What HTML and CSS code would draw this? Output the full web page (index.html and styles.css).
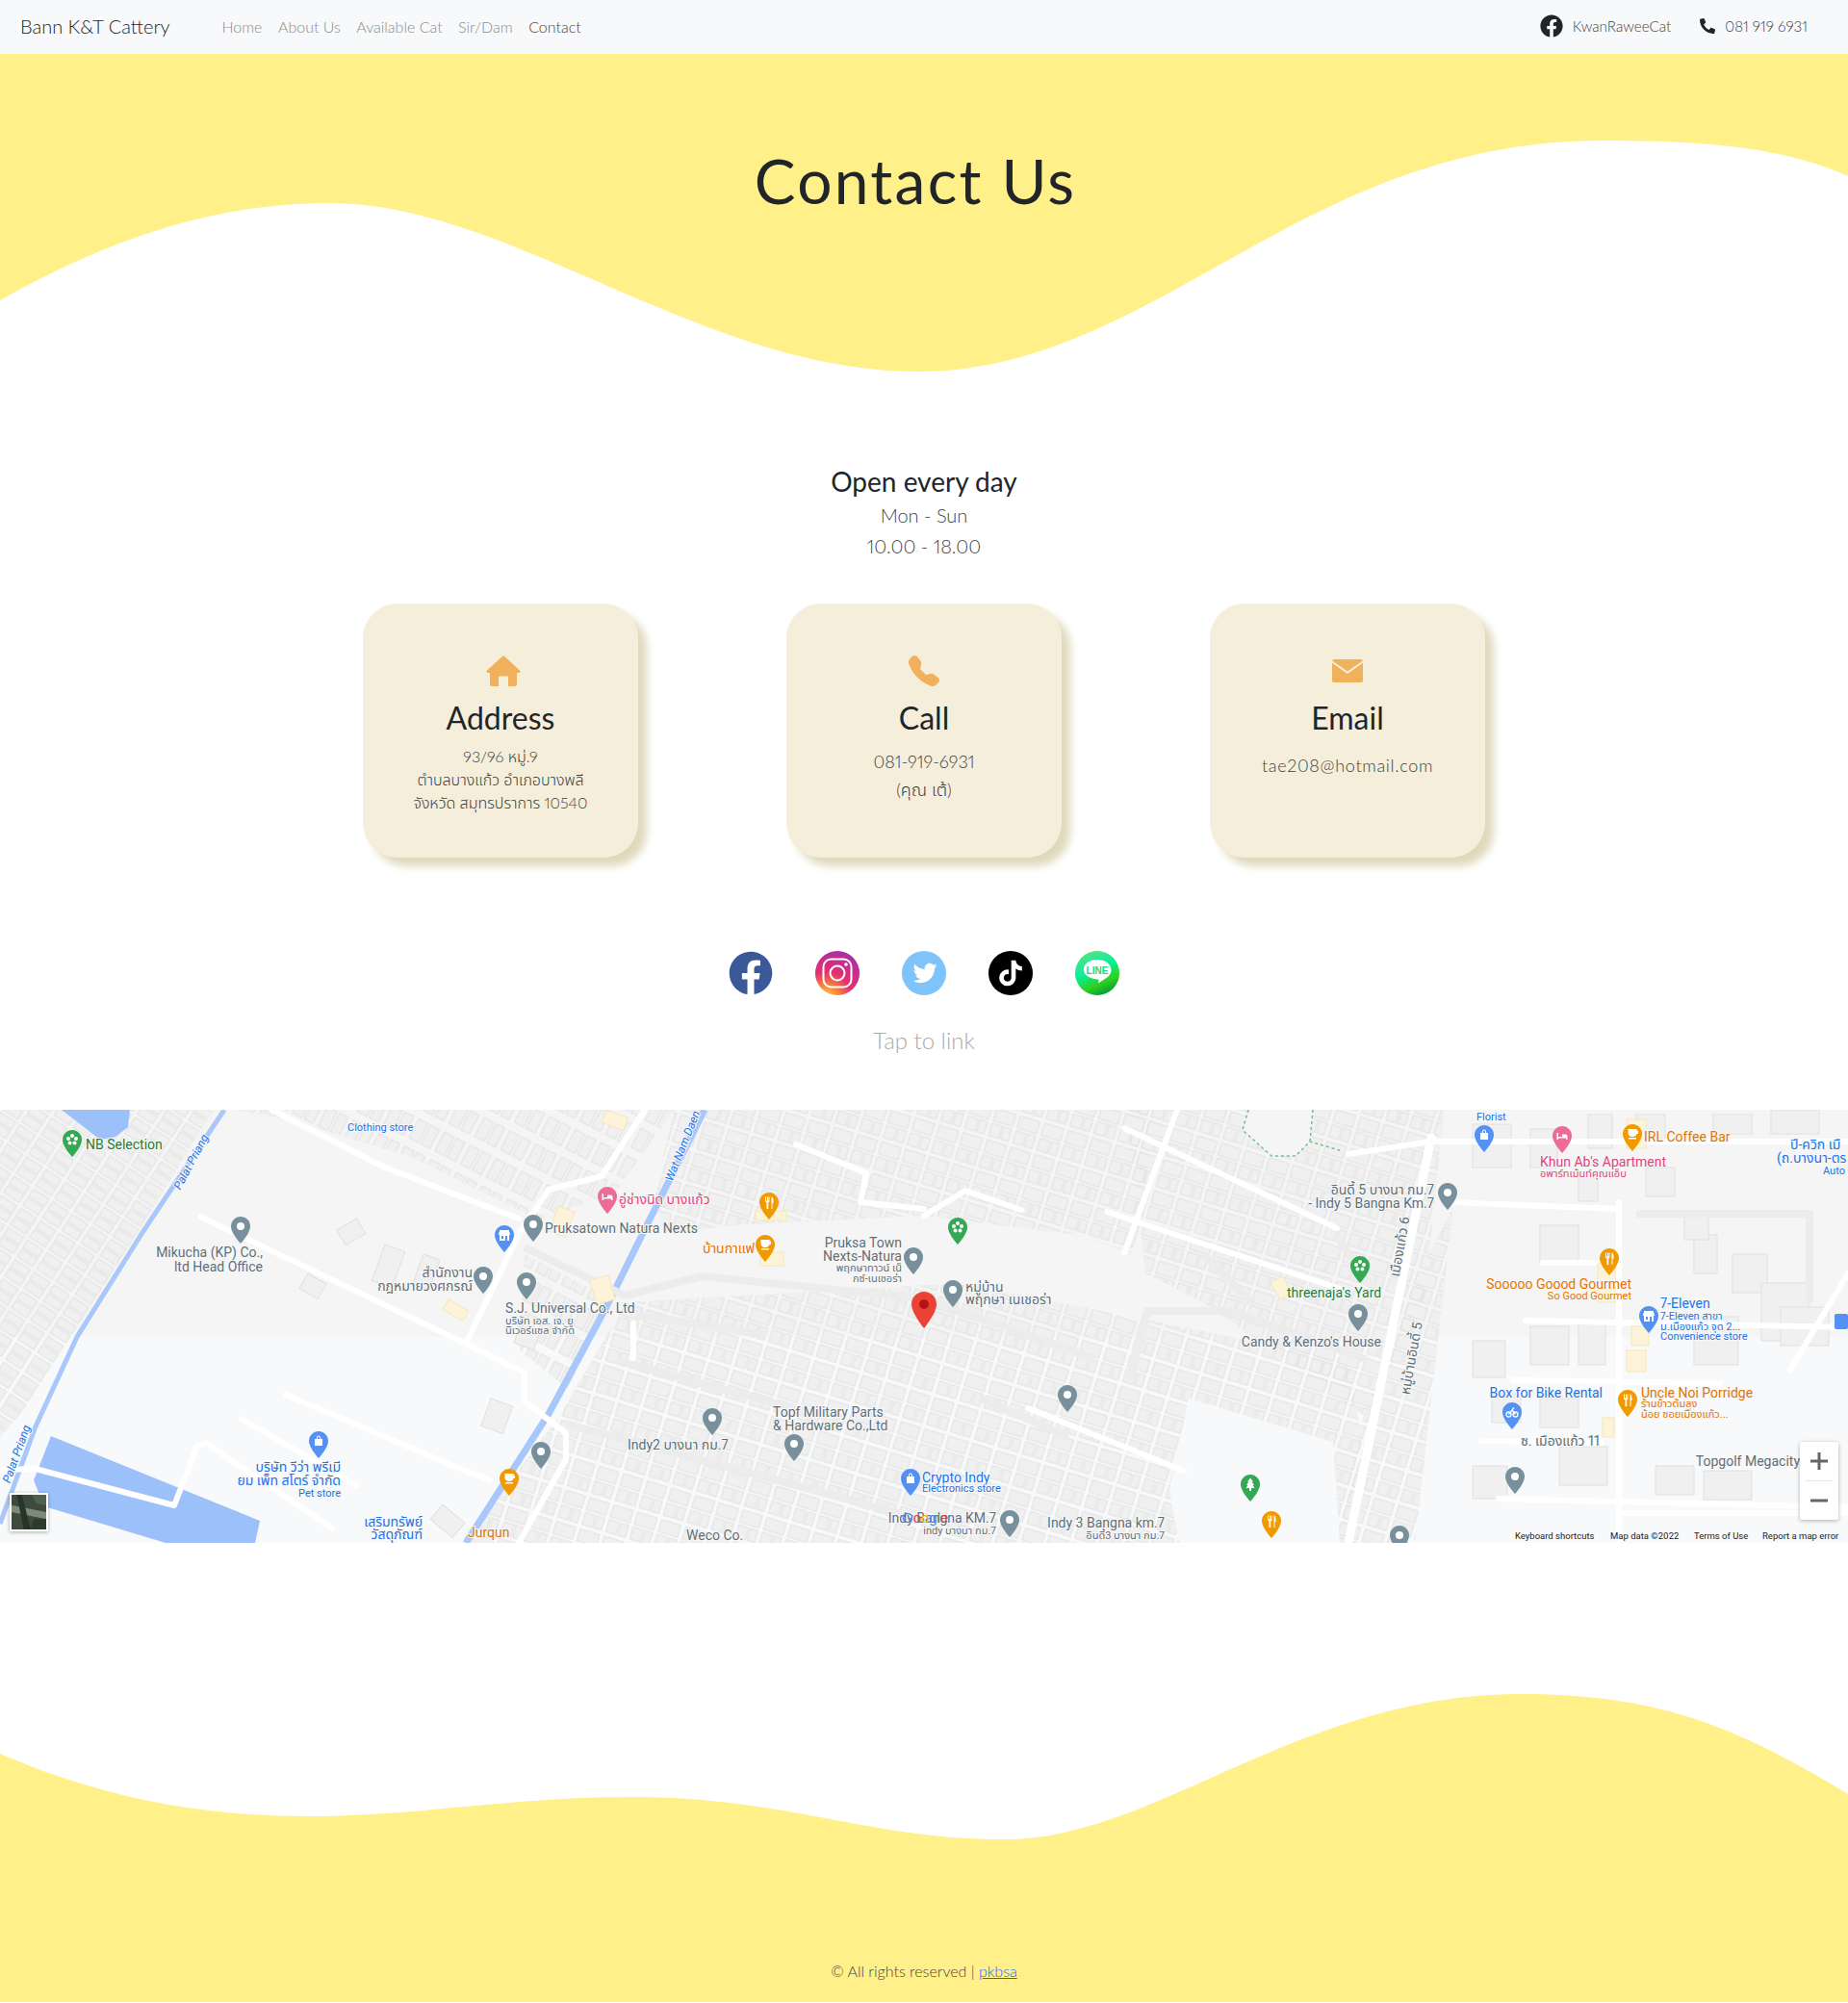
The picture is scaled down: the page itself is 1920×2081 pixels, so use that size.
FILE: index.html
```html
<!DOCTYPE html>
<html lang="th">

<head>
    <meta charset="UTF-8">
    <meta name="viewport" content="width=device-width, initial-scale=1.0">
    <title>Contact Us - Bann K&amp;T Cattery</title>
    <link rel="stylesheet" href="styles.css">
</head>

<body>

    <nav class="navbar">
        <a class="brand" href="#">Bann K&amp;T Cattery</a>
        <ul class="nav-links">
            <li><a href="#">Home</a></li>
            <li><a href="#">About Us</a></li>
            <li><a href="#">Available Cat</a></li>
            <li><a href="#">Sir/Dam</a></li>
            <li><a class="active" href="#">Contact</a></li>
        </ul>
        <div class="nav-contact">
            <a href="#" class="nav-fb">
                <svg class="nav-fb-icon" viewBox="0 0 512 512"><path d="M504 256C504 119 393 8 256 8S8 119 8 256c0 123.78 90.69 226.38 209.25 245V327.69h-63V256h63v-54.64c0-62.15 37-96.48 93.67-96.48 27.14 0 55.52 4.84 55.52 4.84v61h-31.28c-30.8 0-40.41 19.12-40.41 38.73V256h68.78l-11 71.69h-57.78V501C413.31 482.38 504 379.78 504 256z"/></svg>
                KwanRaweeCat
            </a>
            <a href="#" class="nav-phone">
                <svg class="nav-phone-icon" viewBox="0 0 512 512"><path d="M497.39 361.8l-112-48a24 24 0 0 0-28 6.9l-49.6 60.6A370.66 370.66 0 0 1 130.6 204.11l60.6-49.6a23.94 23.94 0 0 0 6.9-28l-48-112A24.16 24.16 0 0 0 122.6.61l-104 24A24 24 0 0 0 0 48c0 256.5 207.9 464 464 464a24 24 0 0 0 23.4-18.6l24-104a24.29 24.29 0 0 0-14.01-27.6z"/></svg>
                081 919 6931
            </a>
        </div>
    </nav>

    <header class="hero">
        <svg class="wave" viewBox="0 0 1920 340" preserveAspectRatio="none">
            <path d="M0 256C100 200 210 155 343 155C530 155 730 330 953 330C1200 330 1350 90 1665 90C1760 90 1850 95 1920 127L1920 0L0 0Z"/>
        </svg>
        <h1>Contact Us</h1>
    </header>

    <section class="hours">
        <h2>Open every day</h2>
        <p>Mon - Sun</p>
        <p>10.00 - 18.00</p>
    </section>

    <section class="cards">
        <div class="card">
            <svg class="card-icon icon-house" viewBox="0 0 36 32"><path d="M18 0.5a2 2 0 0 1 1.5.7L35 15.500a1.400 1.400 0 0 1-1 2.500h-2V30a2 2 0 0 1-2 2h-7V22.500a1 1 0 0 0-1-1h-8a1 1 0 0 0-1 1V32H6a2 2 0 0 1-2-2V18H2a1.400 1.400 0 0 1-1-2.500L16.500 1.200A2 2 0 0 1 18 .5z"/></svg>
            <h3>Address</h3>
            <p class="card-small">93/96 หมู่.9<br>ตำบลบางแก้ว อำเภอบางพลี<br>จังหวัด สมุทรปราการ 10540</p>
        </div>
        <div class="card">
            <svg class="card-icon" viewBox="0 0 16 16"><path d="M1.885.511a1.745 1.745 0 0 1 2.61.163L6.29 2.98c.329.423.445.974.315 1.494l-.547 2.19a.678.678 0 0 0 .178.643l2.457 2.457a.678.678 0 0 0 .644.178l2.189-.547a1.745 1.745 0 0 1 1.494.315l2.306 1.794c.829.645.905 1.87.163 2.611l-1.034 1.034c-.74.74-1.846 1.065-2.877.702a18.634 18.634 0 0 1-7.01-4.42 18.634 18.634 0 0 1-4.42-7.009c-.362-1.03-.037-2.137.703-2.877L1.885.511z"/></svg>
            <h3>Call</h3>
            <p class="card-text">081-919-6931<br>(คุณ เต้)</p>
        </div>
        <div class="card">
            <svg class="card-icon icon-mail" viewBox="0 0 32 24"><path d="M2 0h28a2 2 0 0 1 1.900 1.500L16 12.500 .1 1.500A2 2 0 0 1 2 0z"/><path d="M0 3.800V22a2 2 0 0 0 2 2h28a2 2 0 0 0 2-2V3.800L16 15 0 3.800z"/></svg>
            <h3>Email</h3>
            <p class="card-mail">tae208@hotmail.com</p>
        </div>
    </section>

    <section class="social">
        <div class="social-icons">
            <a href="#"><svg viewBox="0 0 512 512"><path fill="#3b5998" d="M504 256C504 119 393 8 256 8S8 119 8 256c0 123.78 90.69 226.38 209.25 245V327.69h-63V256h63v-54.64c0-62.15 37-96.48 93.67-96.48 27.14 0 55.52 4.84 55.52 4.84v61h-31.28c-30.8 0-40.41 19.12-40.41 38.73V256h68.78l-11 71.69h-57.78V501C413.31 482.38 504 379.78 504 256z"/></svg></a>
            <a href="#"><svg viewBox="0 0 46 46">
                <defs>
                    <radialGradient id="insta" cx="0.25" cy="1.05" r="1.150">
                        <stop offset="0" stop-color="#fed04e"/>
                        <stop offset="0.25" stop-color="#f9803a"/>
                        <stop offset="0.5" stop-color="#e5306f"/>
                        <stop offset="1" stop-color="#a42fa8"/>
                    </radialGradient>
                </defs>
                <circle cx="23" cy="23" r="23" fill="url(#insta)"/>
                <rect x="8.500" y="8.500" width="29" height="29" rx="8" fill="none" stroke="#fff" stroke-width="2"/>
                <circle cx="23" cy="23" r="7.500" fill="none" stroke="#fff" stroke-width="2"/>
                <circle cx="32" cy="14" r="1.800" fill="#fff"/>
            </svg></a>
            <a href="#"><svg viewBox="0 0 46 46">
                <circle cx="23" cy="23" r="23" fill="#7ec4fb"/>
                <svg x="11.500" y="10.500" width="25" height="25" viewBox="0 0 512 512"><path fill="#fff" d="M459.37 151.716c.325 4.548.325 9.097.325 13.645 0 138.72-105.583 298.558-298.558 298.558-59.452 0-114.68-17.219-161.137-47.106 8.447.974 16.568 1.299 25.34 1.299 49.055 0 94.213-16.568 130.274-44.832-46.132-.975-84.792-31.188-98.112-72.772 6.498.974 12.995 1.624 19.818 1.624 9.421 0 18.843-1.3 27.614-3.573-48.081-9.747-84.143-51.98-84.143-102.985v-1.299c13.969 7.797 30.214 12.67 47.431 13.319-28.264-18.843-46.781-51.005-46.781-87.391 0-19.492 5.197-37.36 14.294-52.954 51.655 63.675 129.3 105.258 216.365 109.807-1.624-7.797-2.599-15.918-2.599-24.04 0-57.828 46.782-104.934 104.934-104.934 30.213 0 57.502 12.67 76.67 33.137 23.715-4.548 46.456-13.32 66.599-25.34-7.798 24.366-24.366 44.833-46.132 57.827 21.117-2.273 41.584-8.122 60.426-16.243-14.292 20.791-32.161 39.308-52.628 54.253z"/></svg>
            </svg></a>
            <a href="#"><svg viewBox="0 0 46 46">
                <circle cx="23" cy="23" r="23" fill="#000"/>
                <svg x="10.500" y="9.500" width="25" height="27" viewBox="0 0 448 512"><path fill="#fff" d="M448,209.91a210.06,210.06,0,0,1-122.77-39.25V349.38A162.55,162.55,0,1,1,185,188.31V278.2a74.62,74.62,0,1,0,52.23,71.18V0l88,0a121.18,121.18,0,0,0,1.86,22.17h0A122.18,122.18,0,0,0,381,102.39a121.43,121.43,0,0,0,67,20.14Z"/></svg>
            </svg></a>
            <a href="#"><svg viewBox="0 0 46 46">
                <defs>
                    <linearGradient id="line" x1="0.2" y1="0.1" x2="0.6" y2="1">
                        <stop offset="0" stop-color="#4fe28a"/>
                        <stop offset="0.4" stop-color="#07f09a"/>
                        <stop offset="0.75" stop-color="#2fd01e"/>
                        <stop offset="1" stop-color="#03a03a"/>
                    </linearGradient>
                </defs>
                <circle cx="23" cy="23" r="23" fill="url(#line)"/>
                <path fill="#fff" d="M23 9c8 0 14.500 4.600 14.500 10.800 0 3.700-2.200 6.400-5 8.300-2.600 1.800-5.300 3.200-7.500 4.900-.6.400-.9 0-.8-.6l.3-2.900c-8-.1-15.500-3.900-15.500-9.700C8.500 13.600 15 9 23 9z"/>
                <text class="line-word" x="23" y="23.500">LINE</text>
            </svg></a>
        </div>
        <p class="tap">Tap to link</p>
    </section>

    <div class="map">
        <svg class="map-canvas" viewBox="0 0 1920 450" width="1920" height="450">
            <defs>
                <pattern id="houses" width="26" height="34" patternUnits="userSpaceOnUse" patternTransform="rotate(17)">
                    <rect x="2" y="2" width="21" height="13" class="house"/>
                    <rect x="2" y="18" width="11" height="13" class="house"/>
                    <rect x="15" y="18" width="8" height="13" class="house"/>
                </pattern>
                <pattern id="houses-left" width="24" height="24" patternUnits="userSpaceOnUse" patternTransform="rotate(33)">
                    <rect x="2" y="2" width="19" height="9" class="house"/>
                    <rect x="2" y="13" width="19" height="9" class="house"/>
                </pattern>
                <pattern id="houses-mid" width="30" height="32" patternUnits="userSpaceOnUse" patternTransform="rotate(27)">
                    <rect x="2" y="3" width="11" height="22" class="house"/>
                    <rect x="16" y="3" width="10" height="22" class="house"/>
                </pattern>
                <path id="pin-body" d="M10 0C4.500 0 0 4.500 0 10c0 7.500 10 18 10 18s10-10.500 10-18C20 4.500 15.500 0 10 0z"/>
                <g id="pin-dot"><use href="#pin-body"/><circle cx="10" cy="10" r="4" fill="#fff"/></g>
                <g id="pin-fork"><use href="#pin-body"/><path fill="#fff" d="M6 4.500h1v4h1v-4h1v4h.5v-4h1v5l-1.200 1V17H7.500v-6.500L6 9.500zM12.500 4.500c1.500 0 2 2 2 4.500v2h-1v6h-1z"/></g>
                <g id="pin-cup"><use href="#pin-body"/><path fill="#fff" d="M5.500 5h9v1.500h1.500v3.500h-1.600c-.4 2-1.900 3-4.400 3s-4.500-1.500-4.500-4zM6 14h8v1.500H6z"/></g>
                <g id="pin-shop"><use href="#pin-body"/><path fill="#fff" d="M5 5h10v1.500l1 2.500v1h-1v6H5v-6H4V9l1-2.500zM7 11v3h2v-3zm4 0v5h2v-5z"/></g>
                <g id="pin-bag"><use href="#pin-body"/><path fill="#fff" d="M6 8h2V6.500a2 2 0 0 1 4 0V8h2v7H6zm3 0h2V6.500a1 1 0 0 0-2 0z"/></g>
                <g id="pin-bed"><use href="#pin-body"/><path fill="#fff" d="M4.500 7h1.500v4h4V8.500h3.500a2 2 0 0 1 2 2V14h-1.500v-1.500H6V14H4.500z"/></g>
                <g id="pin-flower"><use href="#pin-body"/><g fill="#fff"><circle cx="10" cy="6" r="2"/><circle cx="6" cy="9" r="2"/><circle cx="14" cy="9" r="2"/><circle cx="7.500" cy="13.500" r="2"/><circle cx="12.500" cy="13.500" r="2"/></g></g>
                <g id="pin-bike"><use href="#pin-body"/><g fill="none" stroke="#fff" stroke-width="1.300"><circle cx="6.500" cy="12.500" r="2.500"/><circle cx="13.500" cy="12.500" r="2.500"/><path d="M6.500 12.500L10 8l3.500 4.500M10 8l2-2.500"/></g></g>
                <g id="pin-tree"><use href="#pin-body"/><path fill="#fff" d="M10 3.500l3 4h-1.500l2.500 3.500h-1.500l2 3H11v3H9v-3H5.500l2-3H6l2.500-3.500H7z"/></g>
            </defs>

            <!-- พื้นแผนที่ -->
            <rect class="land-top" width="1920" height="236"/>
            <rect class="land-bottom" y="236" width="1920" height="214"/>

            <!-- บล็อกบ้าน -->
            <path fill="url(#houses-left)" d="M0 0H222L142 129L75 236L35 300L0 340Z"/>
            <path fill="url(#houses-mid)" d="M244 0H700L640 85L560 115L430 50L300 10Z"/>
            <path fill="url(#houses-mid)" d="M545 150L640 200L590 290L540 250Z"/>
            <path fill="url(#houses)" d="M700 0H1200L1180 150L1120 130L960 110L760 120L690 130L680 90Z"/>
            <path fill="url(#houses)" d="M650 200L1000 180L1400 260L1415 340L1400 450H480L580 320Z"/>
            <path fill="url(#houses)" d="M1170 0H1500L1480 200L1420 320L1250 200L1190 170Z"/>
            <path fill="url(#houses)" d="M1440 240L1510 100L1470 450H1390L1410 340Z"/>
            <path class="land-bottom" d="M1235 300L1385 345L1392 450H1225L1215 395Z"/>
            <path class="blank" d="M1300 0H1364L1361 33L1346 48H1321L1291 21Z"/>

            <!-- ตึกฝั่งขวา -->
            <g class="house">
                <rect x="1530" y="15" width="40" height="45"/><rect x="1590" y="20" width="28" height="40"/>
                <rect x="1640" y="65" width="20" height="30"/><rect x="1710" y="60" width="30" height="30"/>
                <rect x="1760" y="130" width="24" height="40"/><rect x="1800" y="150" width="36" height="40"/>
                <rect x="1830" y="180" width="50" height="60"/><rect x="1850" y="205" width="50" height="40"/>
                <rect x="1530" y="240" width="34" height="38"/><rect x="1590" y="225" width="40" height="40"/>
                <rect x="1640" y="220" width="28" height="45"/><rect x="1760" y="215" width="46" height="50"/>
                <rect x="1550" y="295" width="30" height="30"/><rect x="1600" y="300" width="40" height="30"/>
                <rect x="1620" y="350" width="50" height="40"/><rect x="1530" y="370" width="36" height="34"/>
                <rect x="1720" y="370" width="40" height="30"/><rect x="1770" y="375" width="50" height="30"/>
                <rect x="1600" y="120" width="40" height="40"/><rect x="1750" y="110" width="25" height="25"/>
                <rect x="1700" y="5" width="30" height="25"/><rect x="1780" y="5" width="40" height="20"/>
                <rect x="1840" y="0" width="50" height="25"/><rect x="1650" y="5" width="25" height="35"/>
                <rect x="540" y="225" width="22" height="18" transform="rotate(20 540 225)"/>
                <rect x="510" y="300" width="24" height="30" transform="rotate(20 510 300)"/>
                <rect x="350" y="125" width="24" height="18" transform="rotate(-30 350 125)"/>
                <rect x="400" y="140" width="22" height="40" transform="rotate(20 400 140)"/>
                <rect x="440" y="150" width="18" height="34" transform="rotate(20 440 150)"/>
                <rect x="320" y="170" width="22" height="18" transform="rotate(30 320 170)"/>
                <rect x="460" y="410" width="30" height="20" transform="rotate(40 460 410)"/>
            </g>

            <!-- น้ำ -->
            <g class="water">
                <path d="M64 0H135L133 18L120 28L104 31Z"/>
                <path d="M53 339L270 427L265 450H172L46 412L35 385Z"/>
            </g>
            <g class="canal">
                <path d="M233 0L147 129L80 236L37 329L0 430"/>
                <path class="canal-wide" d="M732 0L674 116L631 203L570 316L484 450"/>
            </g>

            <!-- ถนน -->
            <g class="lane">
                <path d="M545 143L649 193L729 173L960 196L1138 259"/>
                <path d="M1174 279L1192 209H1278L1419 259"/>
                <path d="M1700 108H1880V200"/>
                <path d="M1250 150L1300 200M1388 130L1430 190"/>
                <path d="M661 213L796 234"/>
                <path d="M588 326L960 426"/>
                <path d="M640 260L860 320"/>
                <path d="M1020 300L1110 340"/>
            </g>
            <g class="road">
                <path d="M208 111L484 243L545 273L545 303L588 336L588 363L539 450"/>
                <path d="M282 0L400 60L539 113"/>
                <path d="M670 0L625 69L570 83L539 129L484 243"/>
                <path d="M297 296L478 373L508 384"/>
                <path d="M251 321L370 390"/>
                <path d="M0 374L37 373L181 411L205 349L214 346L345 435"/>
                <path d="M1168 19L1389 123"/>
                <path d="M1150 106L1401 189"/>
                <path d="M1223 0L1168 149"/>
                <path class="road-big" d="M1487 29L1401 450"/>
                <path d="M1682 96V450"/>
                <path d="M1505 96L1682 103"/>
                <path d="M1401 46L1487 33H1920"/>
                <path d="M1572 281L1787 284"/>
                <path d="M1539 344L1664 346"/>
                <path d="M1557 404L1920 413"/>
                <path d="M1682 419H1920"/>
                <path d="M1603 159H1670"/>
                <path d="M1585 219L1920 226"/>
                <path d="M1068 310L1230 375"/>
                <path d="M1860 270L1920 170"/>
                <path d="M960 110L1003 84L1061 104"/>
                <path d="M658 222V258"/>
                <path d="M827 36L900 66L894 96L960 103"/>
            </g>
            <path class="park-line" d="M1297 0L1291 21L1321 48H1346L1361 33L1395 43M1364 0L1361 33"/>

            <!-- ป้ายสีเหลือง -->
            <g class="lot">
                <rect x="630" y="0" width="24" height="14" transform="rotate(20 630 0)"/>
                <rect x="580" y="100" width="18" height="28" transform="rotate(20 580 100)"/>
                <rect x="785" y="105" width="32" height="10"/>
                <rect x="790" y="148" width="24" height="14"/>
                <rect x="613" y="177" width="20" height="26" transform="rotate(-15 613 177)"/>
                <rect x="466" y="197" width="24" height="12" transform="rotate(30 466 197)"/>
                <rect x="1320" y="180" width="14" height="20" transform="rotate(-30 1320 180)"/>
                <rect x="1660" y="160" width="18" height="40"/>
                <rect x="1695" y="225" width="18" height="20"/>
                <rect x="1690" y="250" width="20" height="22"/>
                <rect x="1690" y="10" width="20" height="30"/>
                <rect x="1665" y="320" width="12" height="20"/>
            </g>

            <!-- หมุด -->
            <g class="p-gray">
                <use href="#pin-dot" x="240" y="111"/><use href="#pin-dot" x="544" y="109"/>
                <use href="#pin-dot" x="939" y="143"/><use href="#pin-dot" x="492" y="163"/>
                <use href="#pin-dot" x="537" y="169"/><use href="#pin-dot" x="730" y="310"/>
                <use href="#pin-dot" x="815" y="337"/><use href="#pin-dot" x="552" y="345"/>
                <use href="#pin-dot" x="980" y="177"/><use href="#pin-dot" x="1401" y="202"/>
                <use href="#pin-dot" x="1099" y="286"/><use href="#pin-dot" x="1494" y="76"/>
                <use href="#pin-dot" x="1564" y="371"/><use href="#pin-dot" x="1039" y="416"/>
                <use href="#pin-dot" x="1444" y="432"/>
            </g>
            <g class="p-blue">
                <use href="#pin-shop" x="514" y="120"/><use href="#pin-bag" x="321" y="334"/>
                <use href="#pin-bag" x="936" y="373"/><use href="#pin-bag" x="1532" y="16"/>
                <use href="#pin-shop" x="1703" y="204"/><use href="#pin-bike" x="1561" y="304"/>
            </g>
            <g class="p-orange">
                <use href="#pin-fork" x="789" y="86"/><use href="#pin-cup" x="785" y="130"/>
                <use href="#pin-cup" x="519" y="373"/><use href="#pin-cup" x="1686" y="15"/>
                <use href="#pin-fork" x="1662" y="144"/><use href="#pin-fork" x="1681" y="291"/>
                <use href="#pin-fork" x="1311" y="417"/>
            </g>
            <g class="p-green">
                <use href="#pin-flower" x="65" y="21"/><use href="#pin-flower" x="985" y="112"/>
                <use href="#pin-flower" x="1403" y="152"/><use href="#pin-tree" x="1289" y="379"/>
            </g>
            <g class="p-pink">
                <use href="#pin-bed" x="621" y="80"/><use href="#pin-bed" x="1613" y="17"/>
            </g>
            <rect x="1906" y="212" width="14" height="16" rx="2" class="p-blue"/>
            <g class="pin-main">
                <path d="M960 227s-13-15.500-13-25a13 13 0 0 1 26 0c0 9.500-13 25-13 25z"/>
                <circle cx="960" cy="202" r="5"/>
            </g>

            <!-- ชื่อสถานที่ -->
            <g class="label">
                <text class="l-end" x="273" y="153">Mikucha (KP) Co.,</text>
                <text class="l-end" x="273" y="168">ltd Head Office</text>
                <text class="l-end" x="491" y="174">สำนักงาน</text>
                <text class="l-end" x="491" y="188">กฎหมายวงศกรณ์</text>
                <text x="566" y="128">Pruksatown Natura Nexts</text>
                <text class="l-end" x="937" y="143">Pruksa Town</text>
                <text class="l-end" x="937" y="157">Nexts-Natura</text>
                <text class="l-end l-small" x="937" y="168">พฤกษาทาวน์ เน็</text>
                <text class="l-end l-small" x="937" y="179">กซ์-เนเชอร่า</text>
                <text x="525" y="211">S.J. Universal Co., Ltd</text>
                <text class="l-small" x="525" y="223">บริษัท เอส. เจ. ยู</text>
                <text class="l-small" x="525" y="233">นิเวอร์แซล จำกัด</text>
                <text x="652" y="353">Indy2 บางนา กม.7</text>
                <text x="803" y="319">Topf Military Parts</text>
                <text x="803" y="333">&amp; Hardware Co.,Ltd</text>
                <text x="713" y="447">Weco Co.</text>
                <text class="l-end" x="1035" y="429">Indy Bangna KM.7</text>
                <text class="l-end l-small" x="1035" y="441">indy บางนา กม.7</text>
                <text x="1003" y="189">หมู่บ้าน</text>
                <text x="1003" y="202">พฤกษา เนเชอร่า</text>
                <text class="l-end" x="1435" y="246">Candy &amp; Kenzo's House</text>
                <text class="l-end" x="1490" y="88">อินดี้ 5 บางนา กม.7</text>
                <text class="l-end" x="1490" y="102">- Indy 5 Bangna Km.7</text>
                <text class="l-end" x="1210" y="434">Indy 3 Bangna km.7</text>
                <text class="l-end l-small" x="1210" y="446">อินดี้3 บางนา กม.7</text>
                <text x="1580" y="349">ซ. เมืองแก้ว 11</text>
                <text class="l-end" x="1870" y="370">Topgolf Megacity</text>
                <text class="l-mid" transform="translate(1459 143) rotate(-80)">เมืองแก้ว 6</text>
                <text class="l-mid" transform="translate(1471 259) rotate(-80)">หมู่บ้านอินดี้ 5</text>
            </g>
            <g class="label label-blue">
                <text class="l-small" x="361" y="22">Clothing store</text>
                <text class="l-end" x="354" y="376">บริษัท วีว่า พรีเมี</text>
                <text class="l-end" x="354" y="390">ยม เพ็ท สโตร์ จำกัด</text>
                <text class="l-end l-small" x="354" y="402">Pet store</text>
                <text class="l-end" x="439" y="433">เสริมทรัพย์</text>
                <text class="l-end" x="439" y="446">วัสดุภัณฑ์</text>
                <text x="958" y="387">Crypto Indy</text>
                <text class="l-small" x="958" y="397">Electronics store</text>
                <text class="l-small" x="1534" y="11">Florist</text>
                <text x="1725" y="206">7-Eleven</text>
                <text class="l-small" x="1725" y="218">7-Eleven สาขา</text>
                <text class="l-small" x="1725" y="229">ม.เมืองแก้ว จุด 2...</text>
                <text class="l-small" x="1725" y="239">Convenience store</text>
                <text class="l-end" x="1665" y="299">Box for Bike Rental</text>
                <text x="1860" y="41">ปี-ควิก เมื</text>
                <text x="1846" y="55">(ถ.บางนา-ตร</text>
                <text class="l-small" x="1894" y="67">Auto</text>
                <text class="l-italic" transform="translate(202 56) rotate(-62)">Palat Priang</text>
                <text class="l-italic" transform="translate(21 359) rotate(-70)">Palat Priang</text>
                <text class="l-italic" transform="translate(713 39) rotate(-68)">Wat Nam Daen</text>
            </g>
            <g class="label label-orange">
                <text class="l-end" x="784" y="149">บ้านกาแฟ</text>
                <text x="486" y="444">Jurqun</text>
                <text x="1708" y="33">IRL Coffee Bar</text>
                <text class="l-end" x="1695" y="186">Sooooo Goood Gourmet</text>
                <text class="l-end l-small" x="1695" y="197">So Good Gourmet</text>
                <text x="1705" y="299">Uncle Noi Porridge</text>
                <text class="l-small" x="1705" y="309">ร้านข้าวต้มลุง</text>
                <text class="l-small" x="1705" y="320">น้อย ซอยเมืองแก้ว...</text>
            </g>
            <g class="label label-green">
                <text x="89" y="41">NB Selection</text>
                <text x="1337" y="195">threenaja's Yard</text>
            </g>
            <g class="label label-pink">
                <text x="643" y="98">อู่ช่างนิด บางแก้ว</text>
                <text x="1600" y="59">Khun Ab's Apartment</text>
                <text class="l-small" x="1600" y="70">อพาร์ทเม้นท์คุณแอ็บ</text>
            </g>

            <text class="google" x="937" y="429"><tspan fill="#4285f4">G</tspan><tspan fill="#ea4335">o</tspan><tspan fill="#fbbc05">o</tspan><tspan fill="#4285f4">g</tspan><tspan fill="#34a853">l</tspan><tspan fill="#ea4335">e</tspan></text>

            <g class="attribution">
                <text x="1574" y="446">Keyboard shortcuts</text>
                <text x="1673" y="446">Map data ©2022</text>
                <text x="1760" y="446">Terms of Use</text>
                <text x="1831" y="446">Report a map error</text>
            </g>
        </svg>
        <div class="map-thumb">
            <svg viewBox="0 0 40 40">
                <rect width="40" height="40" fill="#3d4a3c"/>
                <path d="M0 12L40 20V28L0 20Z" fill="#7d8a78"/>
                <path d="M6 0L14 40H22L12 0Z" fill="#26342a"/>
                <path d="M24 0H40V12L28 10Z" fill="#4f6150"/>
                <path d="M26 28H40V40H22Z" fill="#2c3b2d"/>
            </svg>
        </div>
        <div class="map-zoom">
            <button class="zoom-btn"><svg viewBox="0 0 18 18"><path d="M18 10.500H10.500V18h-3V10.500H0v-3h7.500V0h3v7.500H18z"/></svg></button>
            <span class="zoom-sep"></span>
            <button class="zoom-btn"><svg viewBox="0 0 18 18"><path d="M0 7.500h18v3H0z"/></svg></button>
        </div>
    </div>

    <footer class="footer">
        <svg class="wave" viewBox="0 0 1920 477" preserveAspectRatio="none">
            <path d="M0 219C100 262 200 284 324 284C430 284 530 264 655 264C820 264 900 308 1044 308C1200 308 1350 157 1580 157C1730 157 1810 195 1920 261L1920 477L0 477Z"/>
        </svg>
        <p class="copyright">© All rights reserved | <a href="#">pkbsa</a></p>
    </footer>

</body>

</html>
```

FILE: styles.css
```css
* {
    box-sizing: border-box;
}

body {
    margin: 0;
    font-family: Lato, "Noto Sans Thai", "Noto Sans", sans-serif;
    font-weight: 300;
    font-variant-numeric: proportional-nums;
    color: #212529;
    background: #fff;
}

a {
    text-decoration: none;
    color: inherit;
}

/* แถบเมนู */
.navbar {
    display: flex;
    align-items: center;
    height: 56px;
    padding: 0 42px 2px 21px;
    background: #f8f9fa;
}

.brand {
    font-size: 20px;
    margin-right: 54px;
}

.nav-links {
    display: flex;
    gap: 16.500px;
    margin: 0;
    padding: 0;
    list-style: none;
    font-size: 16px;
    color: #8a8c8e;
}

.nav-links .active {
    color: #444;
}

.nav-contact {
    display: flex;
    align-items: center;
    gap: 30px;
    margin-left: auto;
    font-size: 15.200px;
    color: #444;
}

.nav-contact a {
    display: flex;
    align-items: center;
}

.nav-fb-icon {
    width: 24px;
    height: 24px;
    margin-right: 10px;
    fill: #212529;
}

.nav-phone-icon {
    width: 16px;
    height: 16px;
    margin-right: 10px;
    fill: #212529;
}

/* หัวข้อกับคลื่น */
.hero {
    position: relative;
    height: 427px;
    text-align: center;
}

.wave {
    position: absolute;
    top: 0;
    left: 0;
    width: 100%;
    height: 340px;
    fill: #fff08a;
}

.hero h1 {
    position: relative;
    margin: 0;
    padding: 90px 18px 0 0;
    font-size: 64px;
    font-weight: 400;
    line-height: 84px;
    letter-spacing: 2.300px;
}

.hours {
    text-align: center;
}

.hours h2 {
    margin: 0 0 2px;
    font-size: 28px;
    font-weight: 400;
    line-height: 34px;
}

.hours p {
    margin: 0;
    font-size: 20px;
    line-height: 32px;
    color: #444;
}

.cards {
    display: grid;
    grid-template-columns: repeat(3, 286px);
    gap: 154px;
    justify-content: center;
    margin-top: 44px;
}

.card {
    height: 264px;
    padding-top: 54px;
    text-align: center;
    background: #f5eedb;
    border-radius: 36px;
    box-shadow: 9px 9px 9px #dfd9bc;
}

.card-icon {
    display: block;
    width: 36px;
    height: 32px;
    margin: 0 auto;
    fill: #f0b05c;
}

.icon-house {
    transform: translateX(3px);
}

.icon-mail {
    width: 32px;
    height: 24px;
    margin: 4px auto 17px;
}

.card h3 {
    margin: 13px 0 8px;
    font-size: 32px;
    font-weight: 400;
    line-height: 40px;
}

.card p {
    margin: 0;
    color: #3b3f44;
}

.card-small {
    font-size: 16px;
    line-height: 24px;
}

.card-text {
    padding-top: 3px;
    font-size: 18px;
    line-height: 29px;
}

.card-mail {
    padding-top: 7px;
    font-size: 18px;
    line-height: 29px;
    letter-spacing: 0.700px;
}

.social {
    margin-top: 97px;
    text-align: center;
}

.social-icons {
    display: flex;
    justify-content: center;
    gap: 44px;
}

.social-icons a {
    display: block;
    width: 46px;
    height: 46px;
}

.social-icons svg {
    display: block;
}

.line-word {
    font-family: "Liberation Sans", sans-serif;
    font-size: 10px;
    font-weight: 700;
    text-anchor: middle;
    fill: #2fd070;
}

.tap {
    margin: 29px 0 0;
    font-size: 24px;
    line-height: 36px;
    color: #aaa;
}

/* แผนที่ */
.map {
    position: relative;
    height: 450px;
    margin-top: 54px;
    overflow: hidden;
}

.map-canvas {
    display: block;
}

.land-top {
    fill: #f5f5f5;
}

.land-bottom {
    fill: #f8f9fa;
}

.blank {
    fill: #f5f5f5;
}

.house {
    fill: #f0f0f0;
    stroke: #e0e0e0;
    stroke-width: 1;
}

.water {
    fill: #9cc0f9;
}

.canal {
    fill: none;
    stroke: #a8c7fa;
    stroke-width: 5;
}

.canal-wide {
    stroke-width: 7;
}

.road {
    fill: none;
    stroke: #fff;
    stroke-width: 6;
    stroke-linecap: round;
    stroke-linejoin: round;
}

.road-big {
    stroke-width: 9;
}

.lane {
    fill: none;
    stroke: #ececec;
    stroke-width: 8;
    stroke-linejoin: round;
}

.park-line {
    fill: none;
    stroke: #6cc08a;
    stroke-width: 1.500;
    stroke-dasharray: 3 3;
}

.lot {
    fill: #fdf3d8;
    stroke: #f8e6b8;
}

.p-gray {
    fill: #78909c;
}

.p-blue {
    fill: #5491f5;
}

.p-orange {
    fill: #f29900;
}

.p-green {
    fill: #34a853;
}

.p-pink {
    fill: #ec6c95;
}

.pin-main {
    fill: #ea4335;
}

.pin-main circle {
    fill: #b31412;
}

.label {
    font-family: Roboto, "Noto Sans Thai", "Noto Sans", sans-serif;
    font-size: 14px;
    font-weight: 400;
    fill: #5f6f7a;
    paint-order: stroke;
    stroke: #f7f7f7;
    stroke-width: 2px;
}

.label-blue {
    fill: #1a73e8;
}

.label-orange {
    fill: #e37400;
}

.label-green {
    fill: #188038;
}

.label-pink {
    fill: #e0447c;
}

.l-small {
    font-size: 11px;
}

.l-end {
    text-anchor: end;
}

.l-mid {
    text-anchor: middle;
}

.l-italic {
    font-style: italic;
    text-anchor: middle;
    font-size: 12px;
}

.google {
    font-family: "Liberation Sans", sans-serif;
    font-size: 15px;
    font-weight: 400;
}

.attribution {
    font-family: Roboto, sans-serif;
    font-size: 9.500px;
    font-weight: 400;
    fill: #222;
}

.map-thumb {
    position: absolute;
    left: 10px;
    bottom: 12px;
    width: 40px;
    height: 40px;
    border: 2px solid #fff;
    box-shadow: 0 1px 4px rgba(0, 0, 0, 0.3);
}

.map-thumb svg {
    display: block;
    width: 100%;
    height: 100%;
}

.map-zoom {
    position: absolute;
    top: 345px;
    right: 10px;
    width: 40px;
    height: 81px;
    background: #fff;
    box-shadow: 0 1px 4px rgba(0, 0, 0, 0.3);
    border-radius: 2px;
}

.zoom-btn {
    display: block;
    width: 40px;
    height: 40px;
    padding: 11px;
    border: 0;
    background: none;
}

.zoom-btn svg {
    display: block;
    fill: #666;
}

.zoom-sep {
    display: block;
    height: 1px;
    margin: 0 6px;
    background: #e6e6e6;
}

/* ท้ายหน้า */
.footer {
    position: relative;
    display: flex;
    justify-content: center;
    align-items: flex-end;
    height: 477px;
    padding-bottom: 20px;
}

.footer .wave {
    height: 477px;
}

.copyright {
    position: relative;
    margin: 0;
    font-size: 16px;
    line-height: 24px;
    color: #444;
}

.copyright a {
    color: #0d6efd;
    text-decoration: underline;
}
```
